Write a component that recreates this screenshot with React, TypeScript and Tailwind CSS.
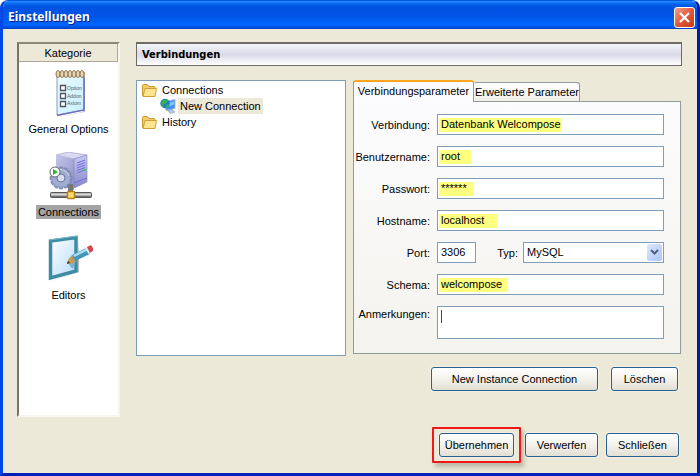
import React, { useState } from "react";

function NotepadIcon() {
  return (
    <svg width="48" height="48" viewBox="0 0 48 48" aria-hidden="true">
      <defs>
        <linearGradient id="paper" x1="0" y1="0" x2="1" y2="1">
          <stop offset="0" stopColor="#eefbff" />
          <stop offset="1" stopColor="#c4efff" />
        </linearGradient>
      </defs>
      <path d="M13 48l24-5 2-2V7l1 1v35l-27 5z" fill="#c4c4cc" />
      <path d="M12 5l27 1.500v34.500L12 46z" fill="url(#paper)" stroke="#8b98c4" />
      <path d="M39 7v34L12 46.500" fill="none" stroke="#6d6fc0" strokeWidth="1.500" />
      <path d="M12 3h28v5H12z" fill="#c2a98c" />
      {[13, 17, 21, 25, 29, 33, 37].map((x) => (
        <ellipse key={x} cx={x} cy="5" rx="2" ry="3.500" fill="#e8d6b0" stroke="#8f7757" />
      ))}
      <g fill="#fff" stroke="#4b5560" strokeWidth="1.300">
        <path d="M15.500 16.500h5v5h-5zM15.500 24.500h5v5h-5zM15.500 32.500h5v5h-5z" />
      </g>
      <g fontFamily="Liberation Sans, sans-serif" fontSize="5" fill="#51616b">
        <text x="22" y="21">Option</text>
        <text x="22" y="29">Addon</text>
        <text x="22" y="36">Axiom</text>
      </g>
    </svg>
  );
}

function ServerIcon() {
  const teeth = Array.from({ length: 12 }, (_, i) => i * 30);
  return (
    <svg width="48" height="48" viewBox="0 0 48 48" aria-hidden="true">
      <defs>
        <linearGradient id="srvFront" x1="0" y1="0" x2="1" y2="1">
          <stop offset="0" stopColor="#c4c5ea" />
          <stop offset="1" stopColor="#8e90c6" />
        </linearGradient>
        <linearGradient id="srvSide" x1="0" y1="0" x2="0" y2="1">
          <stop offset="0" stopColor="#c9caf5" />
          <stop offset="1" stopColor="#8587c5" />
        </linearGradient>
        <linearGradient id="pipe" x1="0" y1="0" x2="0" y2="1">
          <stop offset="0" stopColor="#777" />
          <stop offset=".35" stopColor="#e8e8e8" />
          <stop offset="1" stopColor="#444" />
        </linearGradient>
      </defs>
      <path d="M11 3l12-3 19 3-13 4z" fill="#d9daf2" stroke="#9698c0" strokeWidth=".600" />
      <path d="M11 3l18 4v31l-18-6z" fill="url(#srvFront)" />
      <path d="M29 7l13-4v27l-13 6z" fill="url(#srvSide)" stroke="#8082bd" strokeWidth=".600" />
      <path d="M32 11l8-3M32 13.500l8-3M32 16l8-3M32 18.500l8-3M32 21l8-3M29 31l13-5" stroke="#6f70e0" fill="none" />
      <path d="M38 18.500l3-1" stroke="#25d52f" strokeWidth="1.500" />
      <path d="M23 32h5v8h-5z" fill="#777" />
      <g fill="#8e9cc4" stroke="#65719e" strokeWidth=".600">
        {teeth.map((a) => (
          <rect key={a} x="14" y="15" width="4" height="5" rx="1" transform={`rotate(${a} 16 26)`} />
        ))}
      </g>
      <circle cx="16" cy="26" r="6.500" fill="none" stroke="#a0acd0" strokeWidth="5" />
      <circle cx="16" cy="26" r="4" fill="#d9dcf0" stroke="#6a759e" />
      <path d="M11 18a10 10 0 0 1 13 6" fill="none" stroke="#cfd5eb" />
      <circle cx="10" cy="20" r="5" fill="#fff" stroke="#666" />
      <path d="M8 17l5 3-5 3z" fill="#22bc25" />
      <rect x="5.500" y="40.500" width="41" height="5" rx="1" fill="url(#pipe)" stroke="#555" />
      <rect x="22.500" y="39.500" width="7" height="7" rx="1" fill="#ffdc69" stroke="#bd7b16" strokeWidth="1.500" />
    </svg>
  );
}

function EditorIcon() {
  return (
    <svg width="48" height="48" viewBox="0 0 48 48" aria-hidden="true">
      <defs>
        <linearGradient id="sheet" x1="0" y1="0" x2="1" y2="1">
          <stop offset="0" stopColor="#fff" />
          <stop offset="1" stopColor="#b5dcff" />
        </linearGradient>
      </defs>
      <path d="M6 46l28-9V3l-2 34z" fill="#b7bec2" />
      <path d="M5.500 6L31 2.500V36L5.500 43z" fill="url(#sheet)" stroke="#3f8ba3" strokeWidth="3.500" />
      <path d="M4 5l28.500-4" stroke="#78bccd" />
      <path d="M24 27c0 3 1 5 4 7l3-10z" fill="#73b5d5" />
      <path d="M23 25l4-5 6 4-4 4-7 1z" fill="#c59a53" />
      <path d="M22 29l3-1-2-2z" fill="#3b3020" />
      <path d="M27 20l14-7 4 6-15 7z" fill="#4595bd" />
      <path d="M28 20l14-7 1.500 2-14 7z" fill="#a7def0" />
      <path d="M40 13l3-1.500 3.500 6-3 1.500z" fill="#e4e8ea" />
      <path d="M42 12l4-2 3 5-4 3z" fill="#d64450" />
    </svg>
  );
}

function FolderIcon() {
  return (
    <svg width="16" height="16" viewBox="0 0 16 16" aria-hidden="true">
      <path d="M1.500 13.500V3.500q0-1 1-1h4l1.500 2h5q1 0 1 1v8z" fill="#f2cd66" stroke="#c89a33" />
      <path d="M2 14.500L4 6.500h11.500L14 14.500z" fill="#ffe590" stroke="#cfa03a" />
    </svg>
  );
}

function NetworkIcon() {
  return (
    <svg width="16" height="16" viewBox="0 0 16 16" aria-hidden="true">
      <path d="M5 3.500l10-2v9l-9 2z" fill="#3f93f0" stroke="#a5b6d8" />
      <path d="M7 5l7-1.500v3L7 9z" fill="#80c7ff" />
      <path d="M8 12.500l4-1 3 2.500-5 1.500z" fill="#bcc8e2" stroke="#8a9ac0" strokeWidth=".600" />
      <circle cx="5" cy="5.500" r="4.700" fill="#2375dc" />
      <path d="M2 3q3-3 6-1L7 5 4 6 3 9Q1 7 1 5zM6 7l3-1-1 3-2 1z" fill="#32b54b" />
    </svg>
  );
}

const categories = [
  { name: "General Options", Icon: NotepadIcon },
  { name: "Connections", Icon: ServerIcon },
  { name: "Editors", Icon: EditorIcon },
];

const fieldBase =
  "block h-[21px] w-full min-w-0 border border-[#7f9db9] bg-white bg-no-repeat px-[3px] pb-[2px] text-[11px] leading-4 outline-none";
const mark = " bg-[linear-gradient(#ffff80,#ffff80)] bg-[position:1px_3px]";

type FieldProps = { id: string; label: string; value: string; markClass: string };

function Field({ id, label, value, markClass }: FieldProps) {
  return (
    <>
      <label htmlFor={id} className="text-right">{label}</label>
      <input id={id} type="text" defaultValue={value} className={fieldBase + mark + " " + markClass} />
    </>
  );
}

function XpButton({ children, className }: { children: React.ReactNode; className: string }) {
  return (
    <button
      type="button"
      className={
        "shrink-0 rounded-[3px] border border-[#2a5f92] bg-linear-to-b from-white via-[#f3f2ec] to-[#e2dfd3] text-center text-[11px] shadow-[0_0_0_1px_#ffffff55] " +
        className
      }
    >
      {children}
    </button>
  );
}

export default function App() {
  const [active, setActive] = useState("Connections");
  return (
    <div className="flex min-h-screen flex-col overflow-hidden rounded-t-lg border-x-[3px] border-b-[3px] border-t border-t-[#0058e0] border-r-[#001fa8] border-b-[#0020b8] border-l-[#0047e8] bg-[#ece9d8] font-['Liberation_Sans',Arial,sans-serif] text-[11px] leading-4 text-black">
      <header className="flex h-7 items-center justify-between bg-[linear-gradient(#2b90ff_0%,#0a6cf5_8%,#0053e1_20%,#0055e8_55%,#0066ff_85%,#0052dd_94%,#003cc0_100%)] pl-[5px] pr-[2px]">
        <h1 className="pt-1 font-['Noto_Sans','Open_Sans',sans-serif] text-xs font-bold text-white [text-shadow:1px_1px_#0a1883]">
          Einstellungen
        </h1>
        <button
          type="button"
          aria-label="Schließen"
          className="mt-1 flex size-[21px] items-center justify-center rounded-[3px] border border-white bg-linear-to-br from-[#f0a088] via-[#e2583a] to-[#c33a12]"
        >
          <svg width="13" height="13" viewBox="0 0 13 13" aria-hidden="true">
            <path d="M2 2l9 9M11 2l-9 9" stroke="#fff" strokeWidth="2.200" />
          </svg>
        </button>
      </header>

      <div className="flex flex-1 flex-col pt-[13px] pb-[10px] pl-[14px] pr-[15px]">
        <div className="flex flex-1 gap-4">
          <nav className="mb-[10px] flex w-[103px] shrink-0 flex-col border-2 border-t-[#8a887a] border-r-[#f7f5ee] border-b-[#f7f5ee] border-l-[#77756a] bg-white">
            <h2 className="h-[18px] border-r border-b border-[#aca899] bg-[#ece9d8] text-center leading-[18px]">Kategorie</h2>
            <ul className="mt-[7px] flex flex-col gap-4">
              {categories.map(({ name, Icon }) => (
                <li key={name}>
                  <button type="button" onClick={() => setActive(name)} className="flex w-full flex-col items-center gap-[5px] whitespace-nowrap">
                    <Icon />
                    <span className={active === name ? "bg-[#a4a4a4] px-[2px] leading-[14px]" : "px-[2px] leading-[14px]"}>
                      {name}
                    </span>
                  </button>
                </li>
              ))}
            </ul>
          </nav>

          <main className="flex min-w-0 flex-1 flex-col">
            <h2 className="h-6 border border-t-2 border-[#6d6b64] bg-linear-to-b from-[#f4f4fa] via-[#dadae8] to-[#ffffff] pl-[5px] font-['DejaVu_Sans_Condensed','DejaVu_Sans',sans-serif] text-[11px] leading-[22px] font-bold">
              Verbindungen
            </h2>

            <div className="mt-[14px] flex gap-[7px] pr-px">
              <ul className="w-[210px] shrink-0 border border-[#7f9db9] bg-white pt-px pl-1">
                <li>
                  <div className="flex items-center gap-[5px]"><FolderIcon />Connections</div>
                  <ul className="pl-[19px]">
                    <li className="flex items-center gap-[2px]">
                      <NetworkIcon />
                      <span className="bg-[#ece9d8] px-[2px]">New Connection</span>
                    </li>
                  </ul>
                </li>
                <li className="flex items-center gap-[5px]"><FolderIcon />History</li>
              </ul>

              <section className="min-w-0 flex-1 pb-[2px]">
                <div role="tablist" className="flex items-end">
                  <button type="button" role="tab" aria-selected="true" className="relative z-10 -mb-px h-[22px] w-[121px] rounded-t-[3px] border border-t-2 border-b-0 border-[#919b9c] border-t-[#ffa620] bg-[#fcfcfe] pb-[3px] leading-4 whitespace-nowrap">
                    Verbindungsparameter
                  </button>
                  <button type="button" role="tab" aria-selected="false" className="h-[19px] w-[106px] rounded-t-[3px] border border-b-0 border-[#919b9c] border-l-transparent bg-linear-to-b from-white to-[#efeee6] leading-4 whitespace-nowrap">
                    Erweiterte Parameter
                  </button>
                </div>

                <form className="grid grid-cols-[76px_1fr] items-center gap-x-[7px] gap-y-[11px] border border-[#919b9c] bg-linear-to-b from-[#fcfcfe] to-[#f4f3ee] pt-3 pr-4 pb-[14px]">
                  <Field id="verbindung" label="Verbindung:" value="Datenbank Welcompose" markClass="bg-[length:122px_14px]" />
                  <Field id="benutzer" label="Benutzername:" value="root" markClass="bg-[length:32px_14px]" />
                  <Field id="passwort" label="Passwort:" value="******" markClass="bg-[length:35px_14px]" />
                  <Field id="host" label="Hostname:" value="localhost" markClass="bg-[length:58px_14px]" />
                  <label htmlFor="port" className="text-right">Port:</label>
                  <div className="flex items-center">
                    <div className="w-[39px] shrink-0">
                      <input id="port" type="text" defaultValue="3306" className={fieldBase} />
                    </div>
                    <label htmlFor="typ" className="w-[42px] shrink-0 text-right">Typ:</label>
                    <div className="relative ml-[5px] min-w-0 flex-1">
                      <select id="typ" defaultValue="MySQL" className={fieldBase + " appearance-none"}>
                        <option>MySQL</option>
                      </select>
                      <span className="pointer-events-none absolute top-[2px] right-[2px] flex h-[17px] w-[15px] items-center justify-center rounded-[2px] bg-linear-to-br from-[#dce6ff] to-[#adc5f7]">
                        <svg width="9" height="7" viewBox="0 0 9 7" aria-hidden="true">
                          <path d="M1 1l3.500 3.500L8 1" fill="none" stroke="#4d6185" strokeWidth="2" />
                        </svg>
                      </span>
                    </div>
                  </div>
                  <Field id="schema" label="Schema:" value="welcompose" markClass="bg-[length:68px_14px]" />
                  <label htmlFor="notes" className="self-start text-right">Anmerkungen:</label>
                  <textarea
                    id="notes"
                    className="block h-[33px] w-full resize-none border border-[#7f9db9] bg-white bg-[linear-gradient(#444,#444)] bg-[length:1px_13px] bg-[position:3px_3px] bg-no-repeat outline-none"
                  />
                </form>
              </section>
            </div>

            <div className="mt-[11px] flex justify-end gap-[13px] pr-1">
              <XpButton className="h-6 w-[167px]">New Instance Connection</XpButton>
              <XpButton className="h-6 w-[67px]">Löschen</XpButton>
            </div>
          </main>
        </div>

        <footer className="flex items-center justify-end pr-[3px]">
          <div className="mr-1 rounded-[1px] border-2 border-[#f01818] px-[5px] py-1 shadow-[3px_4px_4px_#8888777f]">
            <XpButton className="h-6 w-[75px]">Übernehmen</XpButton>
          </div>
          <XpButton className="mr-2 h-6 w-[73px]">Verwerfen</XpButton>
          <XpButton className="h-6 w-[73px]">Schließen</XpButton>
        </footer>
      </div>
    </div>
  );
}
